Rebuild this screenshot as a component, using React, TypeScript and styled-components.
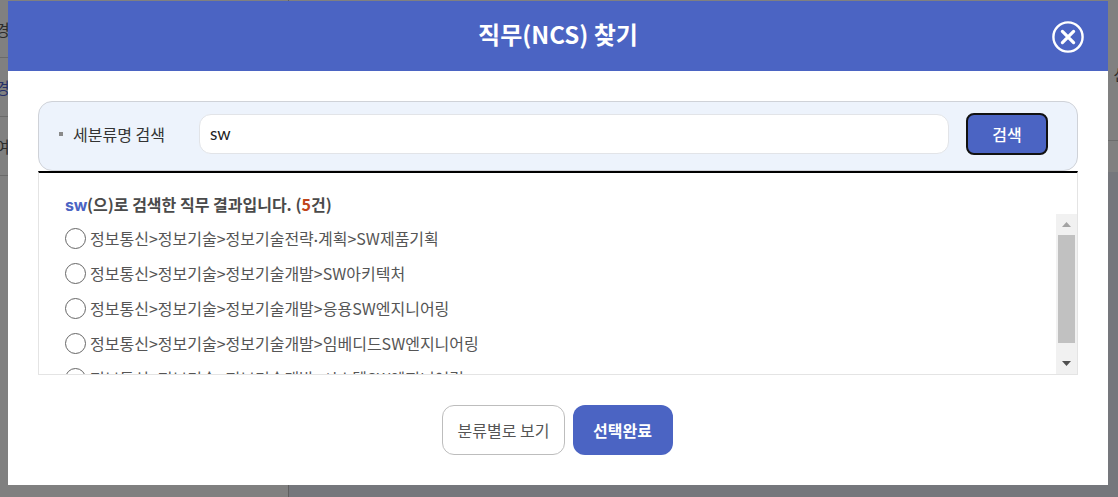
import React from "react";
import styled, { createGlobalStyle } from "styled-components";

const FONT = `"Noto Sans CJK KR", "Noto Sans", sans-serif`;

const Global = createGlobalStyle`
  html, body { margin: 0; padding: 0; width: 1118px; height: 497px; overflow: hidden; background: #808080; }
  * { box-sizing: border-box; }
  body { font-family: ${FONT}; }
`;

const Page = styled.div`
  width: 1118px; height: 497px; display: flex; justify-content: space-between; overflow: hidden; position: relative; background: #808080;
`;
const LeftRail = styled.div`
  width: 289px; height: 497px; display: flex; flex-direction: column; border-right: 1px solid #5f5f5f; flex: none;
`;
const RailRow = styled.div<{ $blue?: boolean; $h: number }>`
  height: ${p => p.$h}px; border-bottom: 1px solid #6a6a6a; display: flex; align-items: center; font-size: 16px; white-space: nowrap;
  justify-content: flex-start; text-indent: -5px; color: ${p => (p.$blue ? "#26306a" : "#2c2c2c")};
`;
const RightPane = styled.div`
  flex: 1; height: 497px; display: flex; flex-direction: column; align-items: flex-end;
`;
const RightTop = styled.div`
  width: 100%; height: 141px; border-bottom: 1px solid #6c6c6c; display: flex; justify-content: flex-end; padding-top: 62px; font-size: 16px; color: #2c2c2c; overflow: hidden;
  span { margin-right: -10px; }
`;
const RightGap = styled.div`
  width: 100%; height: 31px; background: #808080;
`;
const RightBody = styled.div`
  width: 100%; flex: 1; background: #75777c;
`;

const Modal = styled.div`
  position: absolute; left: 8px; top: 1px; width: 1100px; height: 484px; background: #fff; display: flex; flex-direction: column;
`;
const Header = styled.header`
  height: 70px; flex: none; background: #4b64c3; display: flex; align-items: center; justify-content: center; position: relative; padding-bottom: 4px;
`;
const Title = styled.h2`
  margin: 0; color: #fff; font-size: 24px; font-weight: 700; line-height: 30px; letter-spacing: 0;
`;
const CloseButton = styled.button`
  position: absolute; right: 24px; top: 20px; width: 32px; height: 32px; padding: 0; border: 0; background: none; display: block;
  svg { display: block; }
`;
const Body = styled.div`
  flex: 1; display: flex; flex-direction: column; padding: 30px 30px 0;
`;
const SearchBar = styled.div`
  height: 70px; flex: none; background: #edf3fc; border: 1px solid #cfd2d8; border-radius: 14px; display: flex; align-items: center; padding: 0 29px 4px 20px;
`;
const Label = styled.label`
  width: 140px; flex: none; font-size: 16px; color: #333; display: flex; align-items: center;
  &::before { content: ""; width: 4px; height: 4px; background: #8a8a8a; margin-right: 10px; }
`;
const SearchInput = styled.input`
  width: 750px; height: 40px; flex: none; border: 1px solid #e2e4e8; border-radius: 12px; padding: 0 10px 2px; background: #fff; font: 400 17px "Lato", sans-serif; color: #222; outline: none;
`;
const SearchButton = styled.button`
  width: 82px; height: 42px; margin-left: 17px; flex: none; background: #4b64c3; border: 2px solid #111; border-radius: 8px; color: #fff; font: 500 16px ${FONT}; padding: 0;
`;
const Results = styled.div`
  height: 204px; flex: none; border: 1px solid #e4e4e4; border-top: 2px solid #000; display: flex; flex-direction: column; position: relative; overflow: hidden;
`;
const Summary = styled.p`
  margin: 0; padding: 21px 26px 0; height: 40px; flex: none; font-size: 16px; line-height: 20px; font-weight: 700; color: #4a4a4a; white-space: nowrap;
`;
const Query = styled.span`
  color: #4b64c3; font-family: "Inter", sans-serif; font-size: 16px; letter-spacing: -0.3px;
`;
const Count = styled.span`
  color: #c0451a;
`;
const List = styled.ul`
  list-style: none; margin: 0; padding: 7px 0 0 26px; display: flex; flex-direction: column; gap: 0;
`;
const Item = styled.li`
  height: 35px; flex: none; display: flex; align-items: center; gap: 4px; font-size: 16px; color: #555; white-space: nowrap;
`;
const ItemText = styled.span`
  display: block;
`;
const Dot = styled.span`
  font-family: "Lato", sans-serif;
`;
const Radio = styled.span`
  width: 21px; height: 21px; flex: none; margin-top: 2px; border: 1px solid #666; border-radius: 50%; background: #fff;
`;
const Scrollbar = styled.div`
  position: absolute; right: 0; top: 41px; bottom: 0; width: 21px; background: #f1f1f1; display: flex; flex-direction: column; align-items: center;
`;
const ArrowBox = styled.div`
  height: 21px; flex: none; display: flex; align-items: center; justify-content: center; width: 100%;
`;
const Thumb = styled.div`
  width: 17px; height: 108px; flex: none; background: #c1c1c1;
`;
const Track = styled.div`
  flex: 1;
`;
const Footer = styled.div`
  display: flex; justify-content: center; gap: 8px; margin-top: 30px; padding-right: 2px;
`;
const OutlineButton = styled.button`
  width: 123px; height: 50px; border: 1px solid #bdbdbd; border-radius: 12px; background: #fff; color: #555; font: 400 16px ${FONT}; padding: 0 0 0 1px;
`;
const PrimaryButton = styled.button`
  width: 100px; height: 50px; border: 0; border-radius: 12px; background: #4b64c3; color: #fff; font: 700 16px ${FONT}; padding: 0;
`;

const items: React.ReactNode[] = [
  <>정보통신&gt;정보기술&gt;정보기술전략<Dot>·</Dot>계획&gt;SW제품기획</>,
  "정보통신>정보기술>정보기술개발>SW아키텍처",
  "정보통신>정보기술>정보기술개발>응용SW엔지니어링",
  "정보통신>정보기술>정보기술개발>임베디드SW엔지니어링",
  "정보통신>정보기술>정보기술개발>시스템SW엔지니어링",
];

export default function App() {
  return (
    <Page>
      <Global />
      <LeftRail>
        <RailRow $h={58}>경</RailRow>
        <RailRow $h={59} $blue>경</RailRow>
        <RailRow $h={59}>여</RailRow>
      </LeftRail>
      <RightPane>
        <RightTop><span>신</span></RightTop>
        <RightGap />
        <RightBody />
      </RightPane>
      <Modal>
        <Header>
          <Title>직무(NCS) 찾기</Title>
          <CloseButton aria-label="닫기">
            <svg width="32" height="32" viewBox="0 0 32 32" fill="none" stroke="#fff">
              <circle cx="16" cy="16" r="14.6" strokeWidth="2.4" />
              <path d="M10.4 10.4 21.6 21.6M21.6 10.4 10.4 21.6" strokeWidth="3.2" strokeLinecap="round" />
            </svg>
          </CloseButton>
        </Header>
        <Body>
          <SearchBar>
            <Label>세분류명 검색</Label>
            <SearchInput defaultValue="sw" />
            <SearchButton>검색</SearchButton>
          </SearchBar>
          <Results>
            <Summary><Query>sw</Query>(으)로 검색한 직무 결과입니다. (<Count>5</Count>건)</Summary>
            <List>
              {items.map((t, i) => (
                <Item key={i}><Radio /><ItemText>{t}</ItemText></Item>
              ))}
            </List>
            <Scrollbar>
              <ArrowBox>
                <svg width="9" height="5" viewBox="0 0 9 5"><path d="M4.5 0 9 5H0z" fill="#a3a3a3" /></svg>
              </ArrowBox>
              <Thumb />
              <Track />
              <ArrowBox>
                <svg width="9" height="5" viewBox="0 0 9 5"><path d="M0 0h9L4.5 5z" fill="#505050" /></svg>
              </ArrowBox>
            </Scrollbar>
          </Results>
          <Footer>
            <OutlineButton>분류별로 보기</OutlineButton>
            <PrimaryButton>선택완료</PrimaryButton>
          </Footer>
        </Body>
      </Modal>
    </Page>
  );
}
